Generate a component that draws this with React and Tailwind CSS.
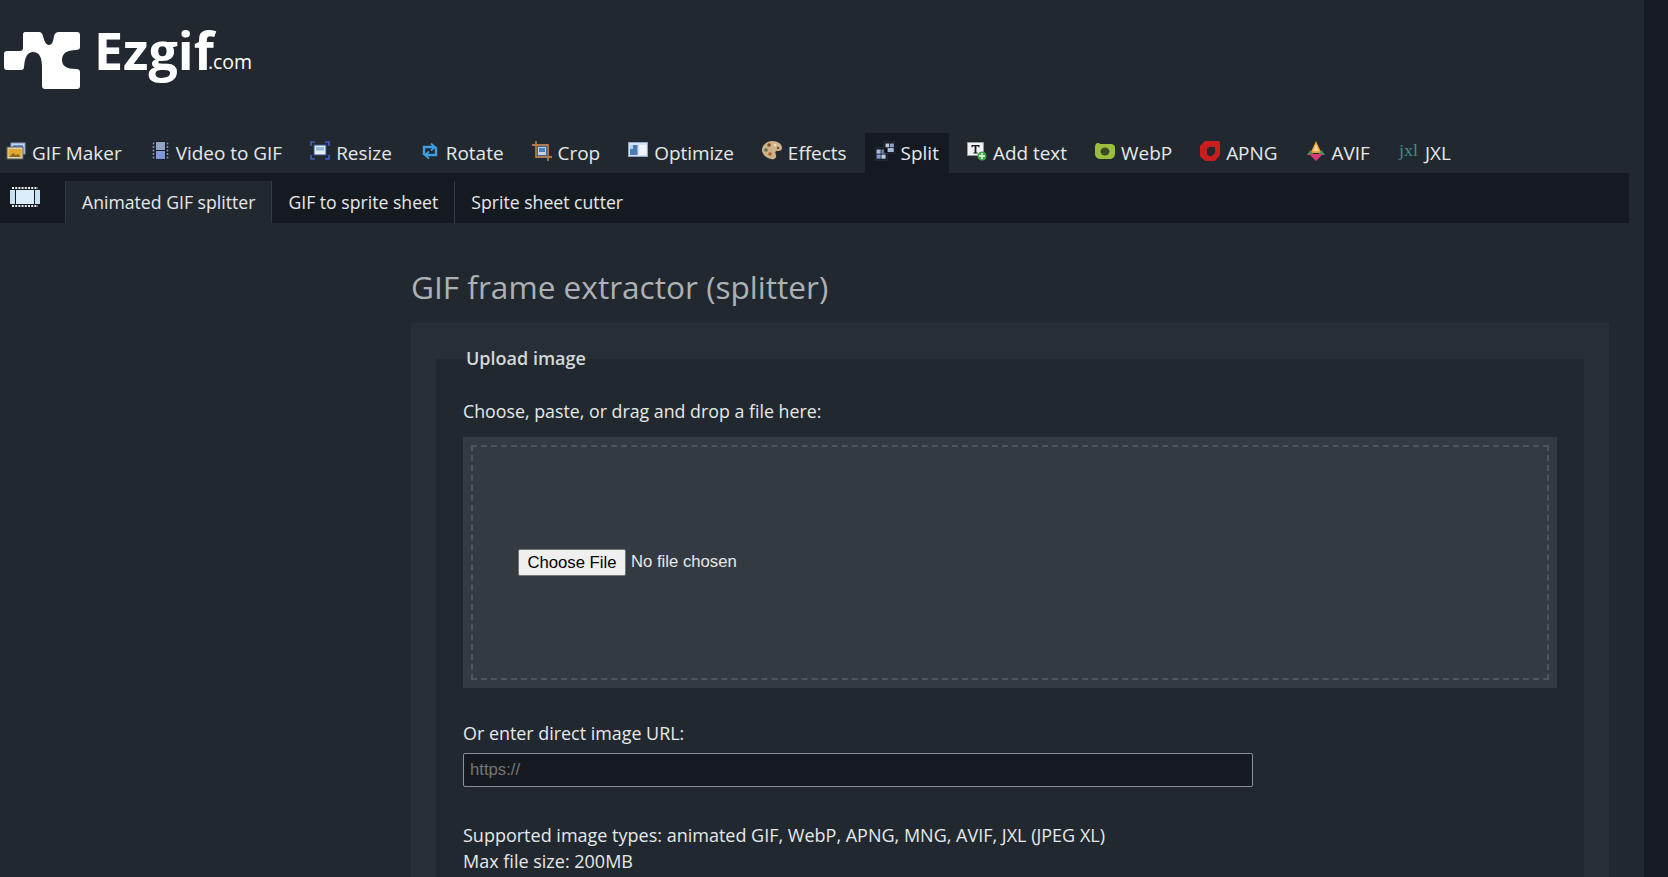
const sans = "font-['Open_Sans','Noto_Sans',sans-serif]";

function GifMakerIcon() {
  return (
    <svg width="20" height="20" viewBox="0 0 20 20">
      <rect x="5" y="2" width="14" height="11" fill="#c5d6ea" stroke="#7f9cc0" />
      <rect x="7" y="4" width="10" height="6" fill="#5f8fd0" />
      <rect x="1" y="6" width="16" height="12" fill="#d8d3bd" stroke="#5c5a4a" />
      <rect x="2.5" y="8" width="13" height="8" fill="#e0aa32" />
      <path d="M3 16l4-4 3 2 2-1 3 3z" fill="#8f6a1e" />
    </svg>
  );
}

function VideoIcon() {
  return (
    <svg width="20" height="20" viewBox="0 0 20 20">
      <rect x="2" y="0" width="17" height="19" fill="#1a1f2b" />
      <rect x="6" y="1" width="9" height="8" fill="#8fa3c4" />
      <rect x="6" y="10" width="9" height="8" fill="#7f97d8" />
      <path d="M3.5 1.5v16M17.5 1.5v16" stroke="#8a94a4" strokeWidth="1.6" strokeDasharray="2 1.5" />
    </svg>
  );
}

function ResizeIcon() {
  return (
    <svg width="20" height="20" viewBox="0 0 20 20">
      <path d="M1 5V1h4M15 1h4v4M1 14v4h4M15 18h4v-4" fill="none" stroke="#3f63c8" strokeWidth="1.6" />
      <rect x="4" y="4" width="12" height="10" fill="#e4edf5" stroke="#2f4f9c" />
      <rect x="6" y="6" width="8" height="3.5" fill="#8fb6d8" />
    </svg>
  );
}

function RotateIcon() {
  return (
    <svg width="20" height="20" viewBox="0 0 20 20" fill="none" stroke="#3f9fe0" strokeWidth="2.4">
      <path d="M4 14V6h10" />
      <path d="M16 6v8H6" />
      <path d="M11 2.5L15 6l-4 3.5M9 10.5L5 14l4 3.5" strokeWidth="1.8" />
    </svg>
  );
}

function CropIcon() {
  return (
    <svg width="20" height="20" viewBox="0 0 20 20">
      <path d="M4 0v16h16M0 4h16v16" fill="none" stroke="#b07a4e" strokeWidth="1.8" />
      <rect x="5.5" y="5.5" width="9" height="9" fill="#c2d3e8" stroke="#3f5f9a" />
      <rect x="7" y="7" width="6" height="4" fill="#4f7fc0" />
    </svg>
  );
}

function OptimizeIcon() {
  return (
    <svg width="20" height="20" viewBox="0 0 20 20">
      <rect x="0.5" y="1.5" width="19" height="14" fill="#d4e2f2" stroke="#8fa8c8" />
      <rect x="2" y="4" width="7.5" height="10" fill="#4a7bb8" />
      <rect x="11" y="4" width="7" height="10" fill="#f0f5fb" />
      <rect x="2" y="4" width="3" height="4" fill="#b9d2ea" />
    </svg>
  );
}

function EffectsIcon() {
  return (
    <svg width="20" height="20" viewBox="0 0 20 20">
      <path d="M10 0c6 0 10 3 10 7 0 3-3 3-5 3-2 0-2 2-1 4 1 3-2 5-5 4C4 17 0 13 0 9 0 4 5 0 10 0z" fill="#cdb288" />
      <circle cx="7" cy="4" r="1.8" fill="#7a4a28" />
      <circle cx="13" cy="4" r="1.6" fill="#e8d8b8" />
      <circle cx="4" cy="9" r="1.8" fill="#5f6f4a" />
      <circle cx="8" cy="13" r="1.8" fill="#a8602c" />
      <circle cx="16" cy="7" r="1.3" fill="#6b5a46" />
    </svg>
  );
}

function SplitIcon() {
  return (
    <svg width="20" height="20" viewBox="0 0 20 20">
      <rect x="0" y="7" width="12" height="12" fill="#0c0f15" stroke="#3c4656" strokeWidth="0.6" />
      <rect x="1.5" y="8.5" width="4.2" height="4.2" fill="#a4b8d8" />
      <rect x="6.4" y="8.5" width="4.2" height="4.2" fill="#6f88b8" />
      <rect x="1.5" y="13.5" width="4.2" height="4.2" fill="#7f9ccc" />
      <rect x="6.4" y="13.5" width="4.2" height="4.2" fill="#bccadc" />
      <rect x="9" y="1" width="11" height="11" fill="#0c0f15" stroke="#3c4656" strokeWidth="0.6" />
      <rect x="10.5" y="2.5" width="3.8" height="3.8" fill="#bccadc" />
      <rect x="15" y="2.5" width="3.8" height="3.8" fill="#8fa6d4" />
      <rect x="12.6" y="7" width="6.2" height="4" fill="#a4b8d8" />
    </svg>
  );
}

function AddTextIcon() {
  return (
    <svg width="20" height="20" viewBox="0 0 20 20">
      <rect x="0.5" y="1.5" width="16" height="13" fill="#f2f2f2" stroke="#9a9a9a" />
      <path d="M4.5 4h8v2.2h-1L11 5.2H9.4v6.2h1.2v1H6.4v-1h1.2V5.2H6l-.5 1h-1z" fill="#15181c" />
      <circle cx="15" cy="15" r="4.6" fill="#3fa44a" />
      <path d="M15 12v6M12 15h6" stroke="#c8f0c8" strokeWidth="1.8" />
    </svg>
  );
}

function WebpIcon() {
  return (
    <svg width="20" height="20" viewBox="0 0 20 20">
      <path d="M3 2h1l1 1h11c2 0 4 1 4 4v6c0 3-3 5-5 5H6c-3 0-6-2-6-5V6c0-2 1-4 3-4z" fill="#9bbf3c" />
      <ellipse cx="10" cy="10.5" rx="4.5" ry="4" fill="#3b4a24" />
    </svg>
  );
}

function ApngIcon() {
  return (
    <svg width="20" height="20" viewBox="0 0 20 20">
      <path d="M5 0h14l1 2v12l-5 6H5l-5-5V5z" fill="#c81e1e" />
      <path d="M9 6h6v6l-3 3H9l-2-2V8z" fill="#22282f" />
    </svg>
  );
}

function AvifIcon() {
  return (
    <svg width="20" height="20" viewBox="0 0 20 20">
      <path d="M10 0l5.5 12h-11z" fill="#f0a030" />
      <path d="M10 3l2.8 7H7.2z" fill="#f6d49a" />
      <path d="M1 14l3.5-5L8 14zM19 14l-3.5-5L12 14z" fill="#4f8f5a" />
      <path d="M3 13h14l-7 7z" fill="#d83c78" />
    </svg>
  );
}

function JxlIcon() {
  return (
    <svg width="21" height="20" viewBox="0 0 21 20">
      <text x="1" y="15" fontFamily="'Liberation Serif', serif" fontSize="17" fill="#3f8f8a" textLength="19" lengthAdjust="spacingAndGlyphs">jxl</text>
    </svg>
  );
}

function FilmIcon() {
  return (
    <svg width="30" height="22" viewBox="0 0 30 22">
      <rect x="0" y="4" width="30" height="14" fill="#c5e0f2" />
      <rect x="6" y="4" width="18" height="14" fill="#dcecf8" />
      <path d="M2 2h26M2 20h26" stroke="#e8eef2" strokeWidth="2" strokeDasharray="2 1.2" />
      <path d="M5.5 4v14M24.5 4v14" stroke="#14181f" />
    </svg>
  );
}

const navItems = [
  { label: 'GIF Maker', Icon: GifMakerIcon },
  { label: 'Video to GIF', Icon: VideoIcon },
  { label: 'Resize', Icon: ResizeIcon },
  { label: 'Rotate', Icon: RotateIcon },
  { label: 'Crop', Icon: CropIcon },
  { label: 'Optimize', Icon: OptimizeIcon },
  { label: 'Effects', Icon: EffectsIcon },
  { label: 'Split', Icon: SplitIcon, active: true },
  { label: 'Add text', Icon: AddTextIcon },
  { label: 'WebP', Icon: WebpIcon },
  { label: 'APNG', Icon: ApngIcon },
  { label: 'AVIF', Icon: AvifIcon },
  { label: 'JXL', Icon: JxlIcon },
];

export default function App() {
  return (
    <div className={`flex h-[877px] overflow-hidden bg-[#171c22] ${sans}`}>
      <div className="w-[1644px] shrink-0 bg-[#22282f]">
        {/* logo */}
        <header className="flex h-[133px] items-start pl-[4px] pt-[32px]">
          <svg width="76" height="57" viewBox="4 32 76 57" fill="#fff">
            <path d="M25 32H39Q42 32 43 36Q45 45 49 45Q53 45 54 36Q55 32 59 32H77Q80 32 80 35V47Q80 50 76 50Q62 50 62 60Q62 69 76 69Q80 69 80 72V86Q80 89 77 89H45Q42 89 42 86V67Q42 52 33 52Q25 52 24 67Q24 70 21 70H7Q4 70 4 67V54Q4 51 7 51H20Q23 51 23 48V35Q23 32 25 32Z" />
          </svg>
          <span className="ml-[14px] mt-[-14px] text-[52px] leading-[64px] font-bold text-white">Ezgif</span>
          <span className="ml-[-6px] mt-[18px] text-[19.5px] leading-[24px] text-white">.com</span>
        </header>

        {/* main nav */}
        <nav className="ml-[-4px] flex h-[40px] gap-[8px] text-[18.95px] text-[#e6e8ea]">
          {navItems.map(({ label, Icon, active }) => (
            <a
              key={label}
              className={`flex h-[40px] items-center gap-[6px] px-[10px] ${active ? 'bg-[#151a21]' : ''}`}
            >
              <span className="mt-[-5px] flex">
                <Icon />
              </span>
              {label}
            </a>
          ))}
        </nav>

        {/* sub nav */}
        <div className="mr-[15px] flex h-[50px] items-end bg-[#151a21] text-[17.65px] text-[#e6e8ea]">
          <div className="flex h-full w-[65px] items-center pl-[10px] pb-[2px]">
            <FilmIcon />
          </div>
          <a className="flex h-[42px] items-center border-x border-[#343a42] bg-[#22282f] px-[16px]">Animated GIF splitter</a>
          <a className="flex h-[42px] items-center border-r border-[#343a42] px-[16px]">GIF to sprite sheet</a>
          <a className="flex h-[42px] items-center px-[16px]">Sprite sheet cutter</a>
        </div>

        <main className="pl-[411px] pr-[35px]">
          <h1 className="mt-[42px] h-[58px] text-[31.6px] leading-[44px] text-[#adb1b5]">GIF frame extractor (splitter)</h1>

          <section className="h-[600px] bg-[#282e37] px-[25px] pt-[17px]">
            <fieldset className="bg-[#22282f] px-[27px] pb-[60px] pt-[20px]">
              <legend className="ml-[3px] pb-[2px] text-[18px] leading-[36px] font-semibold text-[#d5d8da]">Upload image</legend>
              <p className="text-[17.8px] leading-[26px] text-[#e6e8ea]">Choose, paste, or drag and drop a file here:</p>
              <div className="mt-[13px] h-[251px] bg-[#343a42] p-[8px]">
                <div className="flex h-full items-center border-2 border-dashed border-[#4f555c] pl-[45px]">
                  <button className="h-[27px] w-[108px] rounded-[2px] border border-[#767676] bg-[#efefef] pb-[2px] font-['Liberation_Sans',sans-serif] text-[16.7px] text-black">Choose File</button>
                  <span className="ml-[5px] pb-[2px] font-['Liberation_Sans',sans-serif] text-[16.7px] text-[#e6e8ea]">No file chosen</span>
                </div>
              </div>
              <label className="mt-[32px] block text-[17.9px] leading-[26px] text-[#e6e8ea]">Or enter direct image URL:</label>
              <input
                placeholder="https://"
                className="mt-[7px] block h-[34px] w-[790px] rounded-[2px] border border-[#8a8f94] bg-[#151a21] px-[6px] font-['Liberation_Sans',sans-serif] text-[16.7px] placeholder:text-[#757575]"
              />
              <p className="mt-[35px] text-[18px] leading-[26px] text-[#e6e8ea]">
                Supported image types: animated GIF, WebP, APNG, MNG, AVIF, JXL (JPEG XL)
                <br />
                Max file size: 200MB
              </p>
            </fieldset>
          </section>
        </main>
      </div>
    </div>
  );
}
